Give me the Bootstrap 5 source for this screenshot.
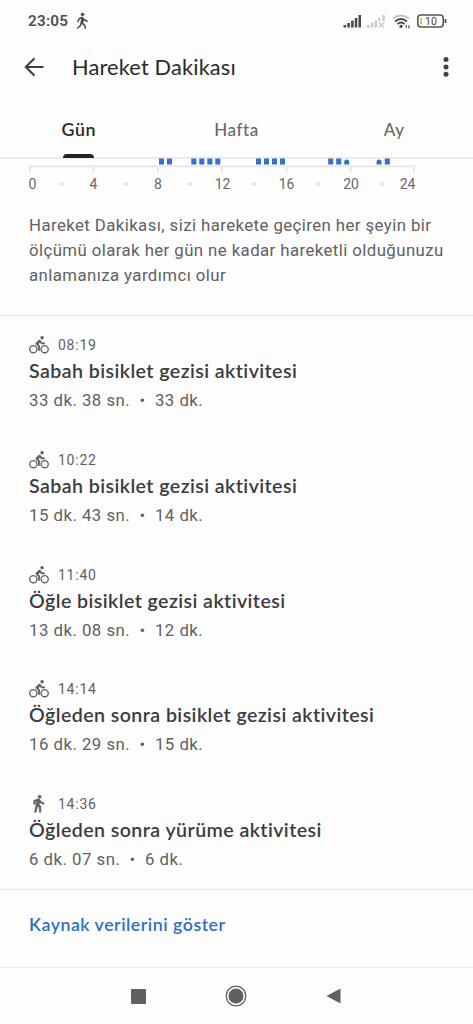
<!DOCTYPE html>
<html lang="tr">
<head>
<meta charset="utf-8">
<meta name="viewport" content="width=device-width, initial-scale=1">
<title>Hareket Dakikası</title>
<link href="https://cdn.jsdelivr.net/npm/bootstrap@5.3.0/dist/css/bootstrap.min.css" rel="stylesheet">
<style>
body{font-family:Roboto,"Liberation Sans",sans-serif;background:#fdfdfd;color:#606164;width:473px;height:1024px;overflow:hidden}
svg{display:block;flex:none}
.display-face{font-family:Lato,"Open Sans",sans-serif}
.status{height:42px;padding:0 25px 0 28px}
.clock{font-size:15.300px;font-weight:600;letter-spacing:.2px;color:#505050;line-height:20px}
.appbar{height:50px;padding:0 21px 0 24px}
.appbar h1{font-size:21.8px;font-weight:400;color:#2b2b2d;line-height:28px;letter-spacing:.15px}
.tabs{height:67px;border-bottom:2px solid #ebebec}
.tabs a{width:158px;font-size:17px;font-weight:500;color:#67686a;letter-spacing:.6px;padding-top:25px;line-height:26px;text-decoration:none;text-align:center}
.tabs a.active{color:#29292b;font-weight:600;font-size:17.8px;padding-top:24px}
.tabs a.active::after{content:"";width:31px;height:4px;border-radius:4px 4px 0 0;background:#252527;margin-bottom:-1px}
.chart{margin-top:-1px}
.chart text{font-family:Roboto,sans-serif;font-size:14px;fill:#68696b;text-anchor:middle}
.intro{font-size:16.8px;line-height:25px;letter-spacing:.42px;padding:13px 20px 0 29px;height:116px;border-bottom:1px solid #e7e7e8;white-space:nowrap}
.activities{height:574px;padding:18px 29px 0;border-bottom:1px solid #e3e3e4}
.activity{height:114.75px}
.activity .me-2{margin-right:9px!important}
.activity time{font-size:14px;letter-spacing:.75px;line-height:22px}
.activity h2{font-size:19.6px;font-weight:600;color:#3b3c3f;line-height:30px;letter-spacing:.43px;white-space:nowrap}
.activity p{font-size:16.8px;line-height:24px;letter-spacing:.48px;padding-top:2px}
.source{height:78px;padding:20px 29px;border-bottom:1px solid #ececec}
.source a{font-size:17.8px;font-weight:600;color:#2e6fc3;line-height:28px;letter-spacing:.5px;text-decoration:none}
.navkeys{height:56px;padding:0 132px 0 131px}
</style>
</head>
<body class="d-flex flex-column">
<svg width="0" height="0" class="position-absolute">
<symbol id="bike" viewBox="0 0 24 24"><g fill="none" stroke="currentColor" stroke-width="1.600"><circle cx="5.200" cy="17" r="4.300"/><circle cx="18.800" cy="17" r="4.300"/></g><circle cx="15.700" cy="3.300" r="2.100" fill="currentColor"/><path d="M13 6.500 8.800 10.300 12 13.500V19M12.800 7.200 15.500 10H19" fill="none" stroke="currentColor" stroke-width="2.200" stroke-linejoin="round"/><path d="m8.500 9.500 4-4 2 2-3.500 4z" fill="currentColor"/></symbol>
<symbol id="walk" viewBox="0 0 24 24"><path fill="currentColor" stroke="currentColor" stroke-width=".7" d="M13.500 5.500c1.100 0 2-.9 2-2s-.9-2-2-2-2 .9-2 2 .9 2 2 2zM9.800 8.900 7 23h2.100l1.800-8 2.100 2v6h2v-7.500l-2.100-2 .6-3C14.800 12 16.800 13 19 13v-2c-1.900 0-3.500-1-4.300-2.400l-1-1.600c-.4-.6-1-1-1.700-1-.3 0-.5.1-.8.1L6 8.300V13h2V9.600l1.800-.7"/></symbol>
</svg>

<header class="status d-flex align-items-center justify-content-between">
  <div class="d-flex align-items-center gap-2"><span class="clock">23:05</span>
    <svg width="13" height="18" viewBox="0 0 13 18" fill="none" stroke="#505050" stroke-width="1.600" stroke-linecap="round" stroke-linejoin="round"><circle cx="6.500" cy="2.500" r="1.400" fill="#505050" stroke-width=".8"/><path d="M2 9.500 3 6.700 6 5.500 8 7.500 11 9.300M6 5.500 5.300 10.700 8.500 13 9.300 16M5.300 10.500 4.500 13.500 1.800 16M7.300 6.500 7 10"/></svg>
  </div>
  <svg width="105" height="18" viewBox="343 12 105 18">
    <g fill="#4b4b4c"><path d="M343.500 25h2.600v2.500h-2.600zM347.300 23h2.600v4.500h-2.600zM351.100 20.500h2.600v7h-2.600zM354.800 18h2.500v9.500h-2.500zM358.500 15h2.500v12.500h-2.500z"/></g>
    <g fill="#c9c9ca"><path d="M367 25h2.600v2.500H367zM370.800 23h2.600v4.500h-2.600zM374.600 20.500h2.400v7h-2.400zM378.200 17.500h2v4h-2zM382.300 15h2.400v6h-2.400z"/><path d="m379 22.500 5 5m0-5-5 5" stroke="#c9c9ca" stroke-width="1.400"/></g>
    <g fill="none" stroke-width="1.900"><path d="M393 18.500q8-6 16 0" stroke="#c2c2c2"/><path d="M395 21.400q6-4.800 12 0M397.500 24q3.500-2.800 7 0" stroke="#464646"/></g>
    <circle cx="401" cy="26.300" r="1.600" fill="#464646"/><path d="M406.500 25v3.300m-1-2 1-1.300m2.300 3.300V25m1 2-1 1.300" stroke="#555" stroke-width=".9" fill="none"/>
    <rect x="417.800" y="15" width="25.400" height="12" rx="3" fill="#fefefa" stroke="#565656" stroke-width="1.600"/><path d="M445.500 19v4" stroke="#565656" stroke-width="1.800"/><path d="M421 18v6" stroke="#cdbd58" stroke-width="1.800"/>
    <text x="431" y="25" text-anchor="middle" font-family="Roboto,sans-serif" font-size="10.500" fill="#444">10</text>
  </svg>
</header>

<div class="appbar d-flex align-items-center">
  <svg width="20" height="20" viewBox="0 0 20 20" fill="none" stroke="#414143" stroke-width="2.100"><path d="M19.500 10H2M10.500 1.300 1.800 10l8.700 8.700"/></svg>
  <h1 class="display-face mb-0 ms-4 ps-1 flex-grow-1">Hareket Dakikası</h1>
  <svg width="12" height="22" viewBox="0 0 12 22" fill="#424244"><circle cx="6" cy="3.600" r="2.500"/><circle cx="6" cy="10.900" r="2.500"/><circle cx="6" cy="18.200" r="2.500"/></svg>
</div>

<nav class="tabs display-face d-flex">
  <a class="active d-flex flex-column align-items-center justify-content-between" href="#">Gün</a>
  <a href="#">Hafta</a>
  <a href="#">Ay</a>
</nav>

<svg class="chart" width="473" height="42" viewBox="0 158 473 42">
  <path d="M29 166.200H415" stroke="#e8e8ea" stroke-width="2"/>
  <path d="M30 166v6M93.500 166v6M158 166v6M222 166v6M286.500 166v6M350.500 166v6M414 166v6" stroke="#e8e8ea" stroke-width="2"/>
  <path d="M159 158.500h5v6h-5zM167 158.500h5v6h-5zM191.300 158.500h5v6h-5zM199.300 158.500h5v6h-5zM207.300 158.500h5v6h-5zM215.300 158.500h5v6h-5zM256 158.500h5v6h-5zM264 158.500h5v6h-5zM272 158.500h5v6h-5zM280 158.500h5v6h-5zM328.200 158.500h5v6h-5zM336.200 158.500h5v6h-5zM384.800 158.500h5v6h-5z" fill="#3571c6"/>
  <path d="M344.200 164.500V162a2.500 2.500 0 0 1 5 0v2.500zM376.500 164.500V162a2.500 2.500 0 0 1 5 0v2.500z" fill="#3571c6"/>
  <g fill="#e5e5e6"><circle cx="61.500" cy="184" r="2"/><circle cx="126" cy="184" r="2"/><circle cx="190" cy="184" r="2"/><circle cx="254" cy="184" r="2"/><circle cx="318.500" cy="184" r="2"/><circle cx="382.500" cy="184" r="2"/></g>
  <text x="32.500" y="189">0</text><text x="93.500" y="189">4</text><text x="158" y="189">8</text><text x="222.500" y="189">12</text><text x="286.500" y="189">16</text><text x="351" y="189">20</text><text x="407.500" y="189">24</text>
</svg>

<p class="intro mb-0">Hareket Dakikası, sizi harekete geçiren her şeyin bir<br>ölçümü olarak her gün ne kadar hareketli olduğunuzu<br>anlamanıza yardımcı olur</p>

<main class="activities">
  <article class="activity"><div class="d-flex align-items-center"><svg class="me-2" width="20" height="20"><use href="#bike"/></svg><time>08:19</time></div><h2 class="display-face mb-0">Sabah bisiklet gezisi aktivitesi</h2><p class="mb-0">33 dk. 38 sn. &nbsp;•&nbsp; 33 dk.</p></article>
  <article class="activity"><div class="d-flex align-items-center"><svg class="me-2" width="20" height="20"><use href="#bike"/></svg><time>10:22</time></div><h2 class="display-face mb-0">Sabah bisiklet gezisi aktivitesi</h2><p class="mb-0">15 dk. 43 sn. &nbsp;•&nbsp; 14 dk.</p></article>
  <article class="activity"><div class="d-flex align-items-center"><svg class="me-2" width="20" height="20"><use href="#bike"/></svg><time>11:40</time></div><h2 class="display-face mb-0">Öğle bisiklet gezisi aktivitesi</h2><p class="mb-0">13 dk. 08 sn. &nbsp;•&nbsp; 12 dk.</p></article>
  <article class="activity"><div class="d-flex align-items-center"><svg class="me-2" width="20" height="20"><use href="#bike"/></svg><time>14:14</time></div><h2 class="display-face mb-0">Öğleden sonra bisiklet gezisi aktivitesi</h2><p class="mb-0">16 dk. 29 sn. &nbsp;•&nbsp; 15 dk.</p></article>
  <article class="activity"><div class="d-flex align-items-center"><svg class="me-2" width="20" height="20" viewBox="0 0 20 20"><use href="#walk" x="0" y="0" width="19" height="19"/></svg><time>14:36</time></div><h2 class="display-face mb-0">Öğleden sonra yürüme aktivitesi</h2><p class="mb-0">6 dk. 07 sn. &nbsp;•&nbsp; 6 dk.</p></article>
</main>

<div class="source"><a class="display-face" href="#">Kaynak verilerini göster</a></div>

<footer class="navkeys d-flex align-items-center justify-content-between">
  <svg width="15" height="15"><rect width="15" height="15" rx="1" fill="#606060"/></svg>
  <svg width="22" height="22"><circle cx="11" cy="11" r="9.800" fill="none" stroke="#606060" stroke-width="1.300"/><circle cx="11" cy="11" r="7.500" fill="#606060"/></svg>
  <svg width="15" height="16"><path d="M14.500.5v15L.5 8z" fill="#606060"/></svg>
</footer>
<script src="https://cdn.jsdelivr.net/npm/bootstrap@5.3.0/dist/js/bootstrap.bundle.min.js"></script>
</body>
</html>
